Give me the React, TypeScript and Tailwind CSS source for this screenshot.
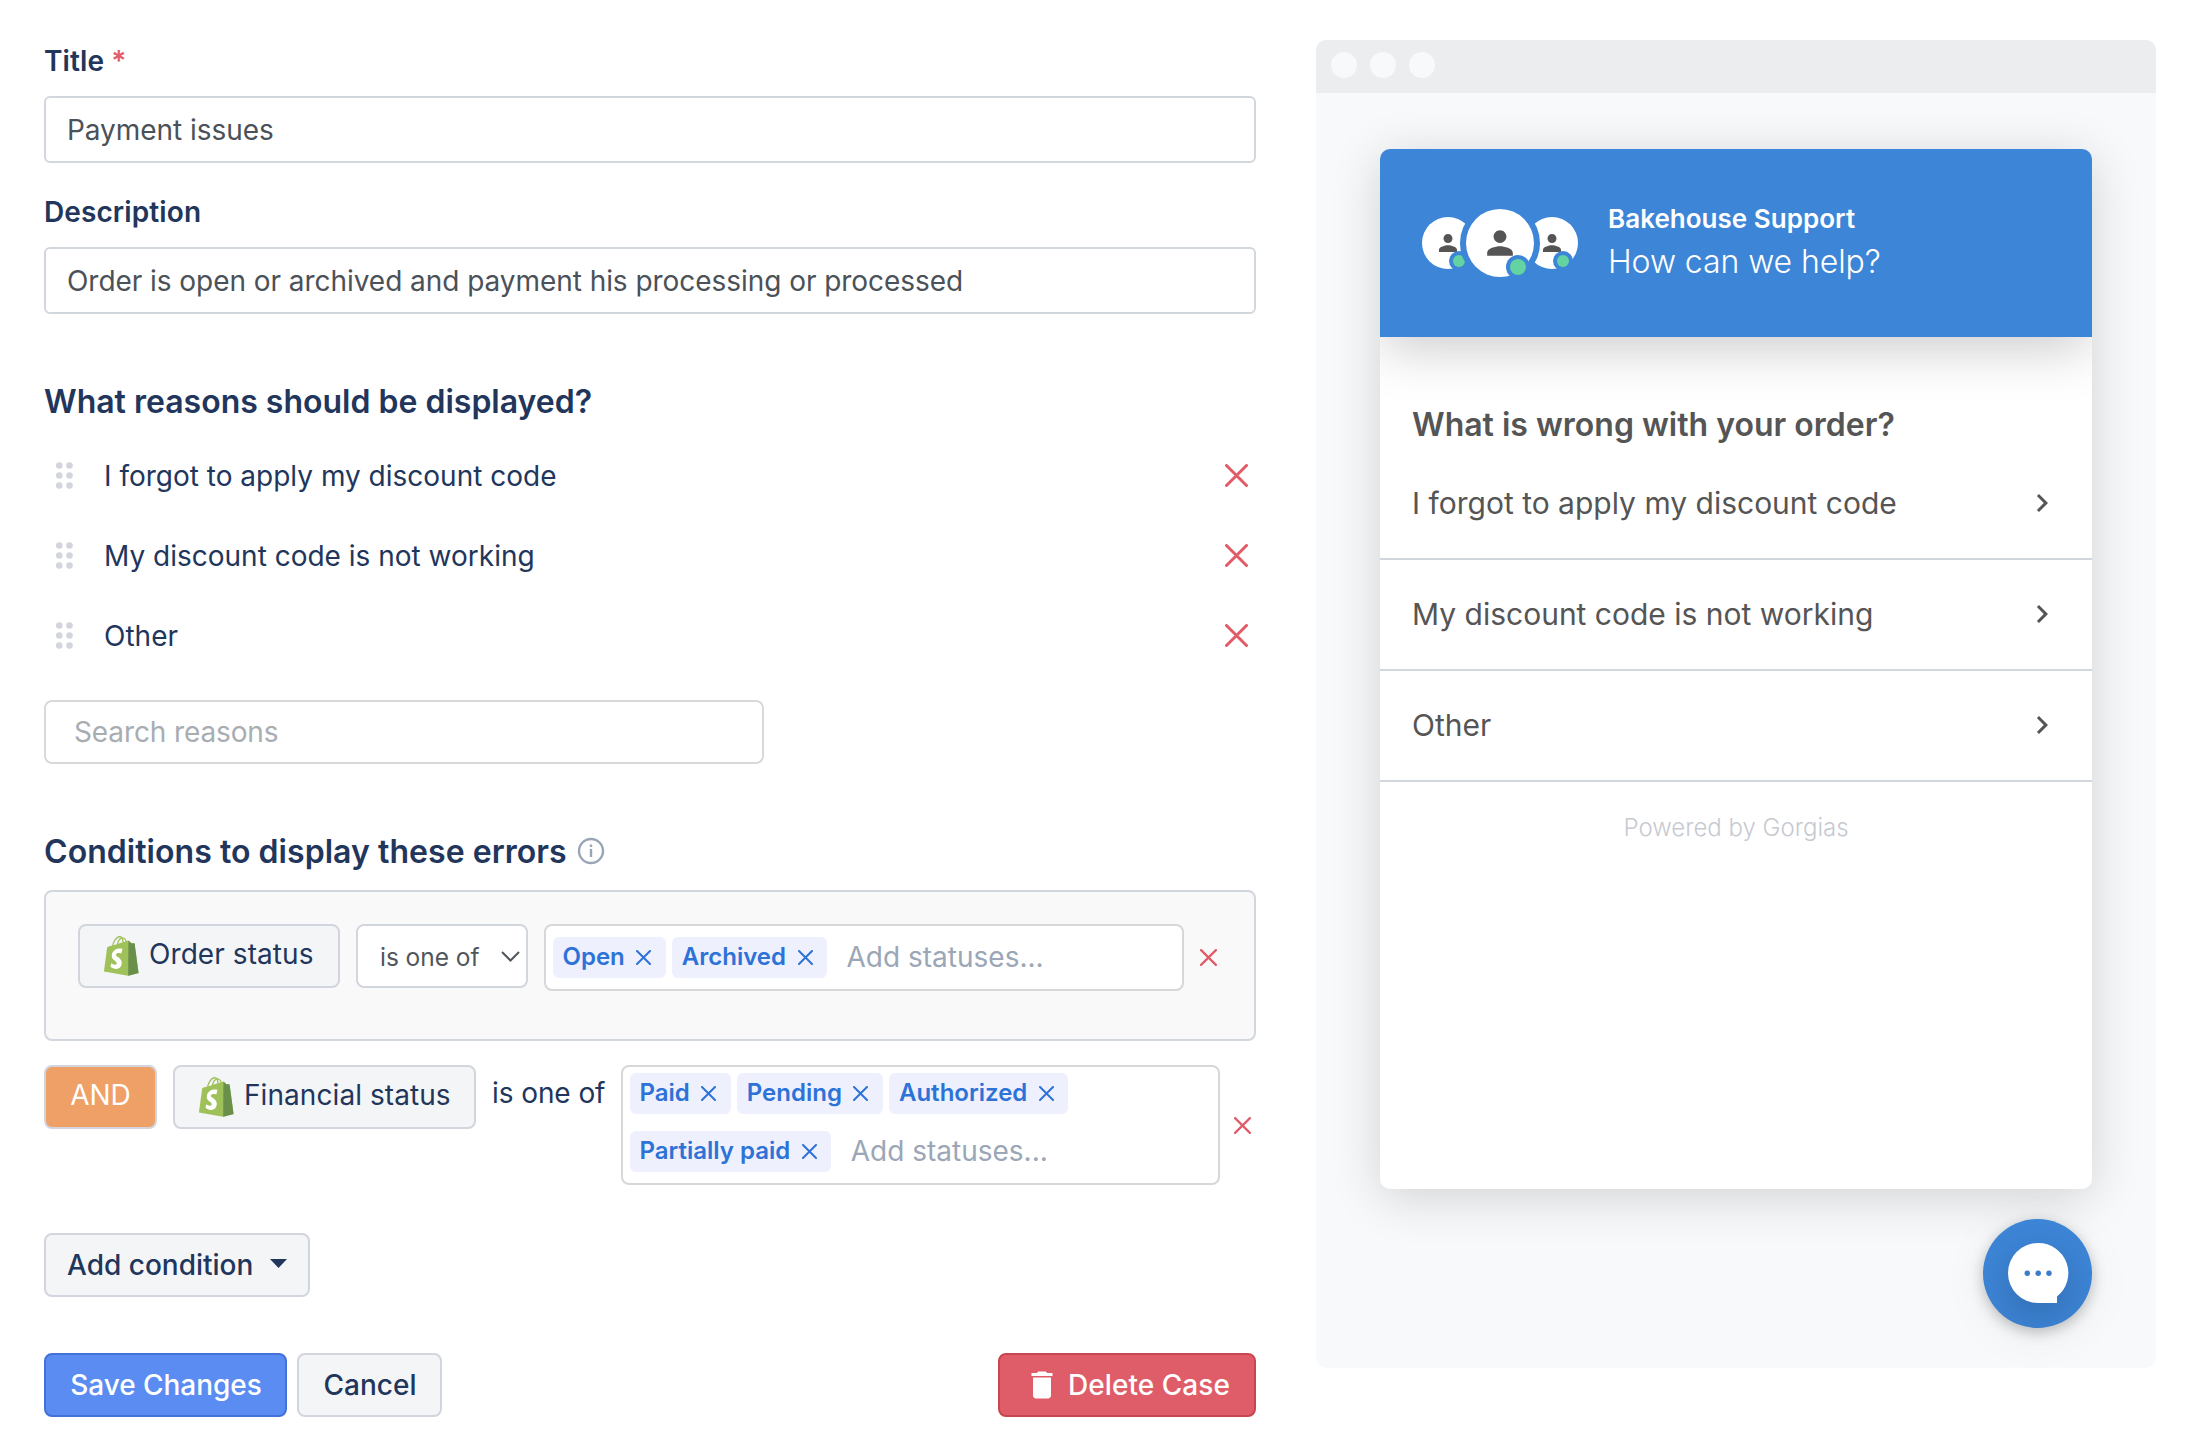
import type { ReactNode } from 'react';

const reasons = ['I forgot to apply my discount code', 'My discount code is not working', 'Other'];

function Cross({ size, stroke, className }: { size: number; stroke: number; className?: string }) {
  const a = stroke / 2;
  const b = size - a;
  return (
    <svg width={size} height={size} viewBox={`0 0 ${size} ${size}`} className={className} fill="none" stroke="currentColor" strokeWidth={stroke}>
      <path d={`M${a} ${a}L${b} ${b}M${b} ${a}L${a} ${b}`} strokeLinecap="round" />
    </svg>
  );
}

function ShopifyBag() {
  return (
    <svg width="35" height="40" viewBox="0 0 109.5 124.5" className="shrink-0">
      <path
        fill="#9fc15a"
        d="M95.9 23.9c-.1-.6-.6-1-1.1-1-.5 0-9.3-.2-9.3-.2s-7.4-7.2-8.1-7.9c-.7-.7-2.2-.5-2.7-.3 0 0-1.4.4-3.7 1.1-.4-1.3-1-2.8-1.8-4.4-2.6-5-6.5-7.7-11.1-7.7-.3 0-.6 0-1 .1-.1-.2-.3-.3-.4-.5C54.7.9 52.1-.1 49 0c-6 .2-12 4.5-16.8 12.2-3.4 5.4-6 12.2-6.8 17.5-6.9 2.1-11.7 3.6-11.8 3.7-3.5 1.1-3.6 1.2-4 4.5C9.2 40.4.1 110.700.1 110.700l75.6 13.1 32.8-8.1S96 24.5 95.9 23.9zM67.2 16.8c-1.8.5-3.8 1.2-5.9 1.8 0-3-.4-7.3-1.8-10.9 4.4.8 6.7 5.9 7.7 9.1zM57.2 19.9c-4 1.2-8.4 2.6-12.8 3.9 1.2-4.7 3.6-9.4 6.4-12.5 1.1-1.1 2.6-2.4 4.3-3.2 1.8 3.5 2.2 8.4 2.1 11.8zM49.1 4.1c1.4 0 2.6.3 3.6.9-1.6.8-3.2 2.1-4.7 3.6-3.8 4.1-6.7 10.5-7.9 16.6-3.6 1.1-7.2 2.2-10.5 3.2C31.7 18.8 39.8 4.4 49.1 4.1z"
      />
      <path
        fill="#6a8f4a"
        d="M94.8 22.9c-.5 0-9.3-.2-9.3-.2s-7.4-7.2-8.1-7.9c-.3-.3-.6-.4-1-.5l-.7 109.5 32.8-8.1S96 24.5 95.9 23.9c-.1-.6-.6-1-1.1-1z"
      />
      <path
        fill="#fff"
        d="M58 39.9l-3.8 14.4s-4.3-2-9.4-1.6c-7.5.5-7.5 5.2-7.5 6.4.4 6.4 17.3 7.8 18.3 22.9.7 11.9-6.3 20-16.4 20.6-12.2.8-18.9-6.4-18.9-6.4l2.6-11s6.7 5.1 12.1 4.7c3.5-.2 4.8-3.1 4.7-5.1-.5-8.4-14.3-7.9-15.2-21.7-.8-11.6 6.9-23.4 23.7-24.4 6.5-.4 9.8 1.2 9.8 1.2z"
      />
    </svg>
  );
}

function Field({ label, required, value }: { label: string; required?: boolean; value: string }) {
  return (
    <label className="block">
      <span className="block text-[28px] leading-[42px] font-semibold tracking-[0.1px]">
        {label}
        {required && <span className="text-[#e25c6a]"> *</span>}
      </span>
      <span className="mt-[14px] flex h-[67px] items-center rounded-md border-2 border-[#d2d6dd] px-[21px] text-[28px] tracking-[-0.05px] text-[#4b5158]">
        {value}
      </span>
    </label>
  );
}

function DragDots() {
  return (
    <svg width="17" height="27" viewBox="0 0 17 27" fill="#d2d5dd" className="relative -top-[0.5px]">
      {[3.5, 13.5, 23.5].map((y) => (
        <g key={y}>
          <circle cx="3.3" cy={y} r="3.3" />
          <circle cx="13.5" cy={y} r="3.3" />
        </g>
      ))}
    </svg>
  );
}

function Tag({ children }: { children: ReactNode }) {
  return (
    <span className="flex h-[41px] items-center rounded-md bg-[#eef0fe] pr-[14.5px] pl-[9.5px] text-[24px] font-semibold text-[#2d72d6]">
      <span className="relative -top-px">{children}</span>
      <Cross size={15} stroke={2} className="relative -top-[0.5px] ml-[11.5px]" />
    </span>
  );
}

function StatusField({ tags, className }: { tags: string[]; className: string }) {
  return (
    <div className={`flex flex-wrap content-start gap-x-[6.5px] gap-y-[17px] rounded-lg border-2 border-[#d6d7d8] bg-white pl-[7px] ${className}`}>
      {tags.map((t) => (
        <Tag key={t}>{t}</Tag>
      ))}
      <span className="ml-[13px] text-[28px] leading-[40px] text-[#9ba6b6]">Add statuses...</span>
    </div>
  );
}

function StatusBadge({ label, className }: { label: string; className: string }) {
  return (
    <div className={`flex h-16 items-center rounded-lg border-2 border-[#d2d5de] bg-[#f4f5f7] text-[28px] tracking-[0.07px] ${className}`}>
      <ShopifyBag />
      <span className="relative -top-[2px] ml-[10px]">{label}</span>
    </div>
  );
}

function Person({ cx, cy, size }: { cx: number; cy: number; size: number }) {
  return (
    <svg x={cx - size / 2} y={cy - size / 2} width={size} height={size} viewBox="0 0 24 24" fill="#555">
      <path d="M12 12c2.21 0 4-1.79 4-4s-1.79-4-4-4-4 1.79-4 4 1.79 4 4 4zm0 2c-2.67 0-8 1.34-8 4v2h16v-2c0-2.66-5.33-4-8-4z" />
    </svg>
  );
}

function Avatars() {
  return (
    <svg width="156" height="68" viewBox="0 0 156 68" className="shrink-0">
      {[26, 130].map((cx) => (
        <g key={cx}>
          <circle cx={cx} cy="34" r="26" fill="#fff" />
          <Person cx={cx} cy={34} size={27} />
          <circle cx={cx + 11} cy="52" r="10" fill="#3d85d7" />
          <circle cx={cx + 11} cy="52" r="6" fill="#62d3a1" />
        </g>
      ))}
      <circle cx="78" cy="34" r="40" fill="#3d85d7" />
      <circle cx="78" cy="34" r="34" fill="#fff" />
      <Person cx={78} cy={34} size={38.5} />
      <circle cx="96" cy="58" r="12" fill="#3d85d7" />
      <circle cx="96" cy="58" r="8" fill="#62d3a1" />
    </svg>
  );
}

function Preview() {
  return (
    <aside className="mt-10 flex h-[1328px] w-[840px] flex-col overflow-hidden rounded-[10px] bg-[#f7f9fb]">
      <div className="flex h-[53px] shrink-0 gap-[13.5px] bg-[#ecedef] pt-3 pl-[15px]">
        {[0, 1, 2].map((i) => (
          <span key={i} className="size-[25.5px] rounded-full bg-[#f7f9fb]" />
        ))}
      </div>
      <div className="mx-16 mt-14 flex h-[1040px] shrink-0 flex-col overflow-hidden rounded-[10px] bg-white text-[#555] shadow-[0_8px_50px_rgba(0,0,0,0.16)]">
        <header className="flex h-[188px] shrink-0 items-center bg-[#3d85d7] pl-[42px] text-white shadow-[0_14px_50px_-2px_rgba(0,0,0,0.20)]">
          <Avatars />
          <div className="relative -top-[3px] ml-[30px]">
            <div className="text-[26px] leading-[43px] font-semibold tracking-[0.03px]">Bakehouse Support</div>
            <div className="text-[32px] leading-[43px] font-light tracking-[-0.08px]">How can we help?</div>
          </div>
        </header>
        <h2 className="mt-[68px] pl-8 text-[32px] leading-[40px] font-semibold">What is wrong with your order?</h2>
        <ul className="mt-[4px]">
          {reasons.map((r) => (
            <li key={r} className="flex h-[111px] items-center justify-between border-b-2 border-[#d2d6dd] px-8 text-[30px]">
              {r}
              <svg width="36" height="36" viewBox="0 0 24 24" fill="#555" className="relative -top-px">
                <path d="M10 6L8.59 7.41 13.17 12l-4.58 4.59L10 18l6-6z" />
              </svg>
            </li>
          ))}
        </ul>
        <p className="mt-[28px] text-center text-[24px] leading-[36px] font-light text-[#c6cad1]">Powered by Gorgias</p>
      </div>
      <button className="mt-[30px] mr-16 size-[109px] shrink-0 self-end rounded-full bg-[#3d85d7] shadow-[0_4px_14px_rgba(0,0,0,0.24),0_8px_48px_rgba(0,0,0,0.06)]">
        <svg width="109" height="109" viewBox="0 0 109 109">
          <defs>
            <clipPath id="launcher">
              <circle cx="54.5" cy="54.5" r="54.5" />
            </clipPath>
          </defs>
          <g clipPath="url(#launcher)">
            <path
              className="drop-shadow-[0_14px_20px_rgba(0,0,0,0.20)]"
              fill="#fff"
              d="M55 24a30 30 0 1 0 0 60h19v-6.5A30 30 0 0 0 55 24z"
            />
          </g>
          <g fill="#3d7cc9">
            <circle cx="44.3" cy="54.3" r="2.7" />
            <circle cx="55.2" cy="54.3" r="2.7" />
            <circle cx="66" cy="54.3" r="2.7" />
          </g>
        </svg>
      </button>
    </aside>
  );
}

export default function App() {
  return (
    <main className="flex h-[1444px] w-[2196px] gap-[60px] overflow-hidden bg-white pl-11 font-['Inter',sans-serif] text-[#22365c]">
      <form className="w-[1212px] pt-10">
        <div className="flex flex-col gap-7">
          <Field label="Title" required value="Payment issues" />
          <Field label="Description" value="Order is open or archived and payment his processing or processed" />
        </div>

        <h2 className="mt-[68px] text-[32px] leading-[40px] font-semibold">What reasons should be displayed?</h2>
        <ul className="mt-[14px]">
          {reasons.map((r) => (
            <li key={r} className="flex h-20 items-center pr-[8.5px] pl-[11.5px] text-[28px]">
              <DragDots />
              <span className="ml-[31.5px] flex-1">{r}</span>
              <Cross size={23} stroke={3} className="relative -top-[0.5px] text-[#e05a68]" />
            </li>
          ))}
        </ul>
        <div className="mt-6 flex h-16 w-[720px] items-center rounded-lg border-2 border-[#d8d9da] px-[28px] text-[28px] tracking-[-0.12px] text-[#a8adb2]">
          Search reasons
        </div>

        <h2 className="mt-[68px] flex items-center text-[32px] leading-[40px] font-semibold tracking-[0.05px]">
          Conditions to display these errors
          <svg width="28" height="28" viewBox="0 0 28 28" className="relative -top-px ml-[10.5px]" fill="none" stroke="#99a5b6" strokeWidth="2.4">
            <circle cx="14" cy="14" r="12" />
            <path d="M14 12v8M14 7.5v2.6" />
          </svg>
        </h2>
        <div className="mt-[18px] flex h-[151px] items-start rounded-lg border-2 border-[#d2d6dd] bg-[#f9f9f9] pt-8 pl-8">
          <StatusBadge label="Order status" className="w-[262px] pl-6" />
          <div className="ml-4 flex h-16 w-[172px] items-center justify-between rounded-lg border-2 border-[#d2d6dd] bg-white pr-[6px] pl-[22px] text-[24.5px] text-[#50565c]">
            <span className="relative top-px tracking-[-0.05px]">is one of</span>
            <svg width="19" height="11" viewBox="0 0 19 11" fill="none" stroke="#50565c" strokeWidth="2">
              <path d="M1 1l8.5 8.5L18 1" />
            </svg>
          </div>
          <StatusField tags={['Open', 'Archived']} className="ml-4 h-[67px] w-[640px] pt-[11px]" />
          <Cross size={17} stroke={2.2} className="mt-[25px] ml-[15.5px] text-[#e05a68]" />
        </div>

        <div className="mt-6 flex items-start text-[28px]">
          <div className="flex h-16 w-[113px] items-center justify-center rounded-lg border-2 border-[#d2d5dd] bg-[#eea067] text-white">
            <span className="relative -top-[2px]">AND</span>
          </div>
          <StatusBadge label="Financial status" className="ml-4 w-[303px] pl-6" />
          <span className="ml-4 w-[129px] leading-[56px] tracking-[-0.08px]">is one of</span>
          <StatusField tags={['Paid', 'Pending', 'Authorized', 'Partially paid']} className="h-[120px] w-[599px] pt-[6px] pr-[140px]" />
          <Cross size={17} stroke={2.2} className="mt-[51.5px] ml-[13.5px] text-[#e05a68]" />
        </div>

        <button className="mt-12 flex h-16 w-[266px] items-center rounded-lg border-2 border-[#d2d5de] bg-[#f4f5f7] pl-[21px] text-[28px] font-medium">
          Add condition
          <svg width="17" height="9" viewBox="0 0 17 9" className="relative -top-[2px] ml-[17px]" fill="currentColor">
            <path d="M0 0h17L8.5 9z" />
          </svg>
        </button>

        <div className="mt-14 flex text-[28px] font-medium">
          <button className="h-16 w-[243px] rounded-lg border-2 border-[#4271d8] bg-[#5a8cf1] pl-px tracking-[-0.05px] text-white">Save Changes</button>
          <button className="ml-[10px] h-16 w-[145px] rounded-lg border-2 border-[#d2d5de] bg-[#f4f5f7] pl-px">Cancel</button>
          <button className="ml-auto flex h-16 w-[258px] items-center rounded-lg border-2 border-[#c94651] bg-[#df5c69] pl-[23.5px] text-white">
            <svg width="36" height="36" viewBox="0 0 24 24" fill="currentColor">
              <path d="M6 19c0 1.1.9 2 2 2h8c1.1 0 2-.9 2-2V7H6v12zM19 4h-3.5l-1-1h-5l-1 1H5v2h14V4z" />
            </svg>
            <span className="ml-[8.5px] tracking-[0.06px]">Delete Case</span>
          </button>
        </div>
      </form>
      <Preview />
    </main>
  );
}
